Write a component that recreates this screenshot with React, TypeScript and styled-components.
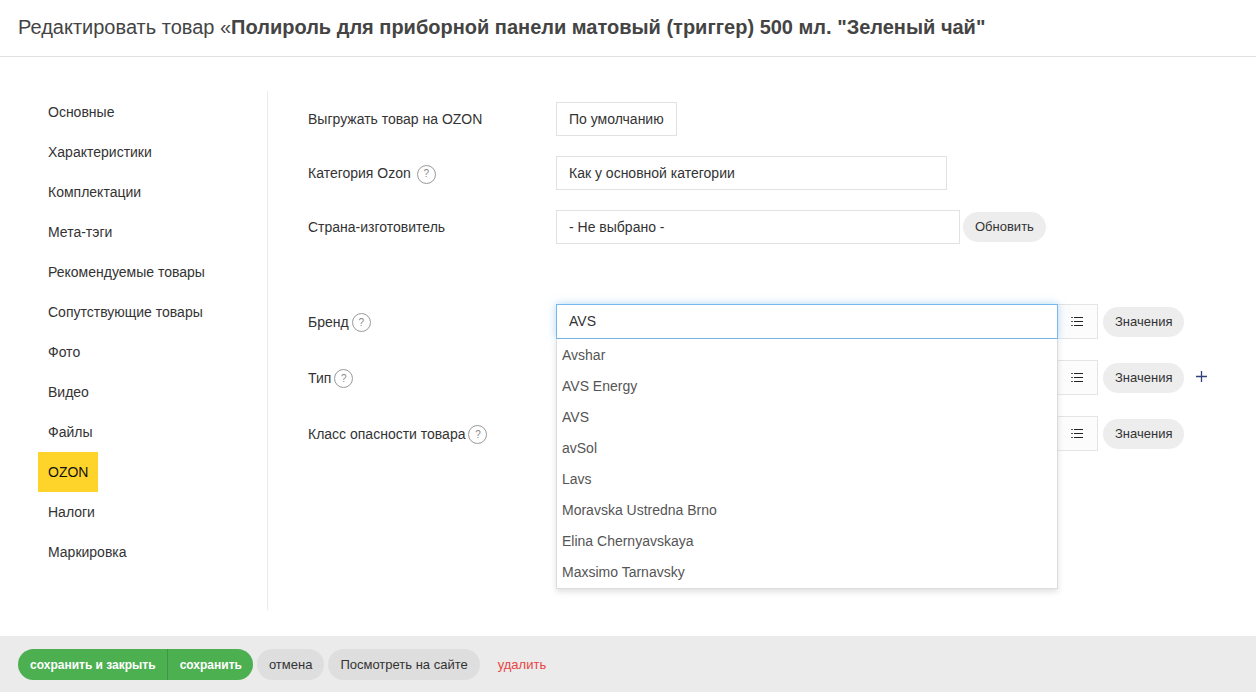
import React, { useState } from "react";
import styled, { createGlobalStyle, css } from "styled-components";

const GlobalStyle = createGlobalStyle`
  *, *::before, *::after { box-sizing: border-box; }
  body {
    margin: 0;
    background: #fff;
    color: #333;
    font-family: "Liberation Sans", Arial, sans-serif;
    font-size: 14px;
    line-height: 20px;
  }
  button, input, select { font-family: inherit; color: inherit; margin: 0; }
`;

const Page = styled.div`
  display: flex;
  flex-direction: column;
  min-height: 100vh;
`;

const Header = styled.header`
  padding: 14px 18px 16px;
  border-bottom: 1px solid #e2e2e2;
`;

const Title = styled.h1`
  margin: 0;
  font-size: 20px;
  line-height: 26px;
  font-weight: 400;
  color: #444;
`;

const Body = styled.main`
  display: flex;
  flex: 1;
  align-items: flex-start;
  padding: 34px 50px 26px 38px;
`;

const Sidebar = styled.nav`
  flex: none;
  width: 230px;
  min-height: 519px;
  padding-top: 1px;
  border-right: 1px solid #ebebeb;
`;

const TabList = styled.ul`
  margin: 0;
  padding: 0;
  list-style: none;
`;

const TabItem = styled.li`
  display: flex;
`;

const TabLink = styled.a<{ $active: boolean }>`
  padding: 0 10px;
  line-height: 40px;
  text-decoration: none;
  color: ${(p) => (p.$active ? "#111" : "#333")};
  background: ${(p) => (p.$active ? "#ffd42a" : "transparent")};
`;

const Form = styled.form`
  flex: 1;
  min-width: 0;
  padding: 11px 0 0 40px;
`;

const Section = styled.div<{ $gap: number }>`
  display: grid;
  row-gap: ${(p) => p.$gap}px;

  & + & { margin-top: 60px; }
`;

const Row = styled.div`
  display: grid;
  grid-template-columns: 248px minmax(0, 1fr);
  align-items: center;
`;

const LabelCell = styled.div<{ $gap: number }>`
  display: flex;
  align-items: center;
  gap: ${(p) => p.$gap}px;
`;

const Help = styled.button`
  width: 19px;
  height: 19px;
  margin-top: 2px;
  padding: 0;
  border: 1px solid #999;
  border-radius: 50%;
  background: #fff;
  color: #888;
  font-size: 10px;
  line-height: 16px;
  text-align: center;
`;

const Control = styled.div`
  display: flex;
  align-items: center;
`;

const Select = styled.select<{ $width: number }>`
  appearance: none;
  width: ${(p) => p.$width}px;
  height: 34px;
  padding: 0 12px;
  border: 1px solid #e2e2e2;
  border-radius: 0;
  background: #fff;
  font-size: 14px;
  outline: none;
`;

const Combo = styled.div`
  position: relative;
  flex: 1;
  min-width: 0;
`;

const TextInput = styled.input<{ $active: boolean }>`
  display: block;
  width: 100%;
  height: 35px;
  padding: 0 12px 1px;
  border: 1px solid #e2e2e2;
  border-radius: 0;
  background: #fff;
  font-size: 14px;
  outline: none;
  ${(p) =>
    p.$active &&
    css`
      position: relative;
      border-color: #78b8ec;
      box-shadow: 0 0 8px rgba(102, 175, 233, 0.5);
    `}
`;

const Suggestions = styled.ul`
  position: absolute;
  z-index: 2;
  top: 100%;
  left: 0;
  right: 0;
  margin: 0;
  padding: 1px 0 0;
  list-style: none;
  background: #fff;
  border: 1px solid #dcdcdc;
  border-top: 0;
  box-shadow: 0 3px 6px rgba(0, 0, 0, 0.12);
`;

const Suggestion = styled.li`
  padding: 0 5px;
  line-height: 31px;
  color: #555;
  cursor: pointer;
`;

const ListButton = styled.button`
  display: flex;
  align-items: center;
  justify-content: center;
  width: 40px;
  height: 35px;
  padding: 0 2px 0 0;
  border: 1px solid #e4e4e4;
  border-left: 0;
  background: #fcfcfc;
`;

const Pill = styled.button<{ $tone?: "light" | "gray" }>`
  height: ${(p) => (p.$tone === "gray" ? 31 : 30)}px;
  padding: 0 12px;
  border: 0;
  border-radius: 16px;
  background: ${(p) => (p.$tone === "gray" ? "#dedede" : "#ededed")};
  font-size: 13px;
  line-height: 20px;
  white-space: nowrap;
`;

const AfterInput = styled.div`
  display: flex;
  align-items: center;
  width: 108px;
  padding-left: 5px;
  gap: 12px;
`;

const AfterSelect = styled.div`
  padding-left: 3px;
`;

const PlusButton = styled.button`
  display: flex;
  padding: 0 0 2px;
  border: 0;
  background: none;
  color: #33427c;
`;

const Footer = styled.footer`
  display: flex;
  align-items: center;
  gap: 4px;
  padding: 13px 18px 12px;
  background: #ebebeb;
`;

const SaveGroup = styled.div`
  display: flex;
  overflow: hidden;
  border-radius: 16px;
`;

const SaveButton = styled.button`
  height: 31px;
  padding: 0 11px 0 12px;
  border: 0;
  background: #4caf50;
  color: #fff;
  font-size: 12px;
  font-weight: 700;

  & + & { border-left: 1px solid #409644; }
`;

const DeleteLink = styled.a`
  padding: 0 14px;
  font-size: 13px;
  color: #e84545;
  text-decoration: none;
`;

const ListIcon = () => (
  <svg width="12" height="10" viewBox="0 0 12 10" shapeRendering="crispEdges" aria-hidden="true">
    <path d="M0 0h2v1H0zM0 4h2v1H0zM0 8h2v1H0z" fill="#555" />
    <path d="M3 0h9v1H3zM3 4h9v1H3zM3 8h9v1H3z" fill="#222" />
  </svg>
);

const PlusIcon = () => (
  <svg width="11" height="11" viewBox="0 0 11 11" aria-hidden="true">
    <path d="M5.5 0v11M0 5.5h11" stroke="currentColor" strokeWidth="1.3" />
  </svg>
);

const tabs = [
  "Основные",
  "Характеристики",
  "Комплектации",
  "Мета-тэги",
  "Рекомендуемые товары",
  "Сопутствующие товары",
  "Фото",
  "Видео",
  "Файлы",
  "OZON",
  "Налоги",
  "Маркировка",
];

const brands = [
  "Avshar",
  "AVS Energy",
  "AVS",
  "avSol",
  "Lavs",
  "Moravska Ustredna Brno",
  "Elina Chernyavskaya",
  "Maxsimo Tarnavsky",
];

interface SelectRowProps {
  id: string;
  label: string;
  value: string;
  width: number;
  help?: boolean;
  children?: React.ReactNode;
}

function SelectRow({ id, label, value, width, help, children }: SelectRowProps) {
  return (
    <Row>
      <LabelCell $gap={6}>
        <label htmlFor={id}>{label}</label>
        {help && <Help type="button">?</Help>}
      </LabelCell>
      <Control>
        <Select id={id} $width={width}>
          <option>{value}</option>
        </Select>
        {children}
      </Control>
    </Row>
  );
}

interface AttributeRowProps {
  id: string;
  label: string;
  initial?: string;
  options?: string[];
  addable?: boolean;
}

function AttributeRow({ id, label, initial = "", options, addable }: AttributeRowProps) {
  const [value, setValue] = useState(initial);
  return (
    <Row>
      <LabelCell $gap={3}>
        <label htmlFor={id}>{label}</label>
        <Help type="button">?</Help>
      </LabelCell>
      <Control>
        <Combo>
          <TextInput
            id={id}
            type="text"
            autoComplete="off"
            $active={!!options}
            value={value}
            onChange={(e) => setValue(e.target.value)}
          />
          {options && (
            <Suggestions>
              {options.map((o) => (
                <Suggestion key={o} onClick={() => setValue(o)}>
                  {o}
                </Suggestion>
              ))}
            </Suggestions>
          )}
        </Combo>
        <ListButton type="button" aria-label="Список">
          <ListIcon />
        </ListButton>
        <AfterInput>
          <Pill type="button">Значения</Pill>
          {addable && (
            <PlusButton type="button" aria-label="Добавить">
              <PlusIcon />
            </PlusButton>
          )}
        </AfterInput>
      </Control>
    </Row>
  );
}

export default function App() {
  const [active, setActive] = useState("OZON");
  return (
    <Page>
      <GlobalStyle />
      <Header>
        <Title>
          Редактировать товар «<b>Полироль для приборной панели матовый (триггер) 500 мл. "Зеленый чай"</b>
        </Title>
      </Header>
      <Body>
        <Sidebar>
          <TabList>
            {tabs.map((t) => (
              <TabItem key={t}>
                <TabLink href="#" $active={t === active} onClick={() => setActive(t)}>
                  {t}
                </TabLink>
              </TabItem>
            ))}
          </TabList>
        </Sidebar>
        <Form>
          <Section $gap={20}>
            <SelectRow id="export" label="Выгружать товар на OZON" value="По умолчанию" width={121} />
            <SelectRow id="category" label="Категория Ozon" value="Как у основной категории" width={391} help />
            <SelectRow id="country" label="Страна-изготовитель" value="- Не выбрано -" width={404}>
              <AfterSelect>
                <Pill type="button">Обновить</Pill>
              </AfterSelect>
            </SelectRow>
          </Section>
          <Section $gap={21}>
            <AttributeRow id="brand" label="Бренд" initial="AVS" options={brands} />
            <AttributeRow id="type" label="Тип" addable />
            <AttributeRow id="hazard" label="Класс опасности товара" />
          </Section>
        </Form>
      </Body>
      <Footer>
        <SaveGroup>
          <SaveButton type="button">сохранить и закрыть</SaveButton>
          <SaveButton type="button">сохранить</SaveButton>
        </SaveGroup>
        <Pill type="button" $tone="gray">отмена</Pill>
        <Pill type="button" $tone="gray">Посмотреть на сайте</Pill>
        <DeleteLink href="#">удалить</DeleteLink>
      </Footer>
    </Page>
  );
}
